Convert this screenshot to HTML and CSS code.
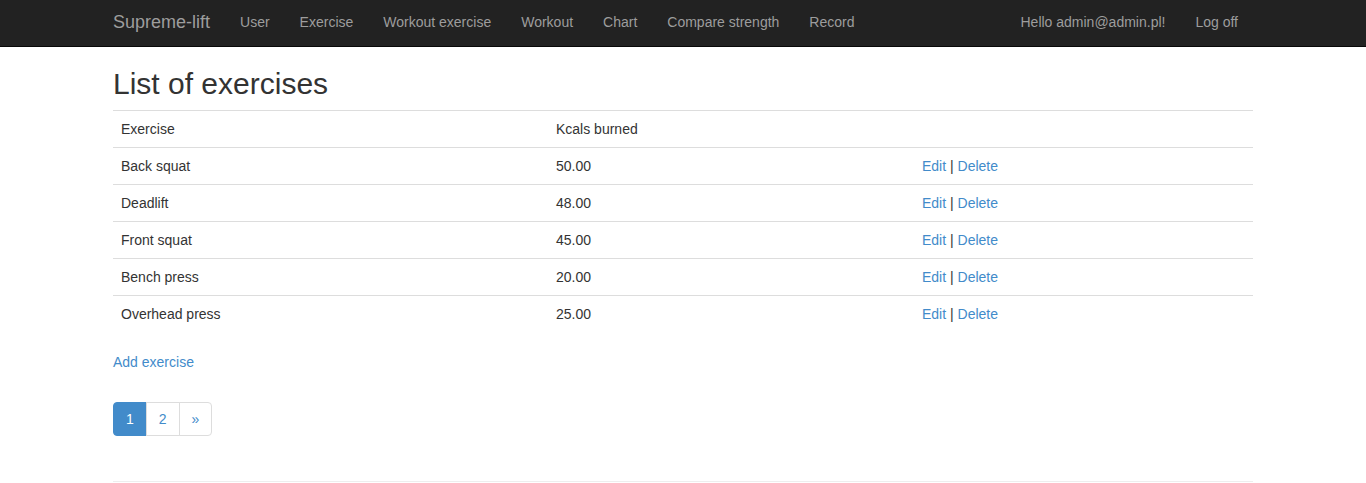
FILE: index.html
```html
<!DOCTYPE html>
<html lang="en">
<head>
<meta charset="utf-8">
<title>List of exercises - Supreme-lift</title>
<link rel="stylesheet" href="styles.css">
</head>
<body>
<nav class="navbar">
  <div class="container nav-inner">
    <a class="brand" href="#">Supreme-lift</a>
    <ul class="nav">
      <li><a href="#">User</a></li>
      <li><a href="#">Exercise</a></li>
      <li><a href="#">Workout exercise</a></li>
      <li><a href="#">Workout</a></li>
      <li><a href="#">Chart</a></li>
      <li><a href="#">Compare strength</a></li>
      <li><a href="#">Record</a></li>
    </ul>
    <ul class="nav nav-right">
      <li><a href="#">Hello admin@admin.pl!</a></li>
      <li><a href="#">Log off</a></li>
    </ul>
  </div>
</nav>
<main class="container">
  <h2 class="title">List of exercises</h2>
  <table class="table">
    <tr><th class="c1">Exercise</th><th class="c2">Kcals burned</th><th></th></tr>
    <tr><td>Back squat</td><td>50.00</td><td><a href="#">Edit</a> | <a href="#">Delete</a></td></tr>
    <tr><td>Deadlift</td><td>48.00</td><td><a href="#">Edit</a> | <a href="#">Delete</a></td></tr>
    <tr><td>Front squat</td><td>45.00</td><td><a href="#">Edit</a> | <a href="#">Delete</a></td></tr>
    <tr><td>Bench press</td><td>20.00</td><td><a href="#">Edit</a> | <a href="#">Delete</a></td></tr>
    <tr><td>Overhead press</td><td>25.00</td><td><a href="#">Edit</a> | <a href="#">Delete</a></td></tr>
  </table>
  <p class="add"><a href="#">Add exercise</a></p>
  <ul class="pagination">
    <li class="active"><a href="#">1</a></li>
    <li><a href="#">2</a></li>
    <li><a href="#">»</a></li>
  </ul>
  <hr class="rule">
</main>
</body>
</html>
```
FILE: styles.css
```css
* { box-sizing: border-box; }
html, body { margin: 0; padding: 0; }
body {
  font-family: "Liberation Sans", Arial, Helvetica, sans-serif;
  font-size: 14px;
  line-height: 20px;
  color: #333;
  background: #fff;
}
a { color: #428bca; text-decoration: none; }
.container {
  width: 1170px;
  margin: 0 auto;
  padding: 0 15px;
}
.navbar {
  background: #222;
  border-bottom: 1px solid #080808;
  height: 47px;
}
.nav-inner {
  display: flex;
  align-items: stretch;
  height: 46px;
}
.brand {
  color: #9d9d9d;
  font-size: 18px;
  line-height: 20px;
  padding: 12px 15px 14px 0;
}
.nav {
  list-style: none;
  margin: 0;
  padding: 0;
  display: flex;
}
.nav a {
  display: block;
  color: #9d9d9d;
  padding: 12px 15px 14px;
  line-height: 20px;
}
.nav-right { margin-left: auto; }
.title {
  font-size: 30px;
  font-weight: 500;
  line-height: 33px;
  margin: 20px 0 10px;
}
.table {
  width: 100%;
  border-collapse: collapse;
  border-spacing: 0;
  margin-bottom: 20px;
}
.table th, .table td {
  padding: 8px;
  line-height: 20px;
  text-align: left;
  vertical-align: top;
  border-top: 1px solid #ddd;
  font-weight: normal;
}
.c1 { width: 435px; }
.c2 { width: 366px; }
.add { margin: 0; }
.pagination {
  list-style: none;
  margin: 30px 0 0;
  padding: 0;
  display: flex;
}
.pagination li a {
  display: block;
  padding: 6px 12px;
  line-height: 20px;
  border: 1px solid #ddd;
  margin-left: -1px;
  color: #428bca;
  background: #fff;
}
.pagination li:first-child a {
  margin-left: 0;
  border-radius: 4px 0 0 4px;
}
.pagination li:last-child a { border-radius: 0 4px 4px 0; }
.pagination li.active a {
  background: #428bca;
  border-color: #428bca;
  color: #fff;
}
.rule {
  border: 0;
  border-top: 1px solid #eee;
  margin: 45px 0 20px;
}
```
